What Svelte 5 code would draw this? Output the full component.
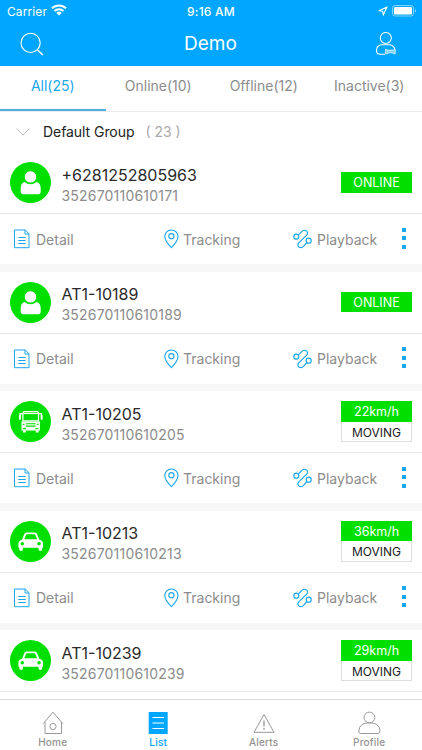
<script lang="ts">
  type Device = {
    name: string;
    imei: string;
    kind: 'person' | 'bus' | 'car';
    speed?: number;
  };

  const tabs = [
    { label: 'All', count: 25 },
    { label: 'Online', count: 10 },
    { label: 'Offline', count: 12 },
    { label: 'Inactive', count: 3 }
  ];

  const devices: Device[] = [
    { name: '+6281252805963', imei: '352670110610171', kind: 'person' },
    { name: 'AT1-10189', imei: '352670110610189', kind: 'person' },
    { name: 'AT1-10205', imei: '352670110610205', kind: 'bus', speed: 22 },
    { name: 'AT1-10213', imei: '352670110610213', kind: 'car', speed: 36 },
    { name: 'AT1-10239', imei: '352670110610239', kind: 'car', speed: 29 }
  ];

  const navItems = ['Home', 'List', 'Alerts', 'Profile'];

  let activeTab = $state('All');
  let activeNav = $state('List');
  let expanded = $state(true);
</script>

<div class="screen">
  <header>
    <div class="status">
      <span class="carrier">Carrier</span>
      <svg class="wifi" width="16" height="12" viewBox="0 0 16 12" fill="none" stroke="#fff" stroke-width="2">
        <path d="M1 4.3a10 10 0 0 1 14 0M3.5 7a6.4 6.4 0 0 1 9 0" />
        <path d="M8 11.5 5.4 8.9a3.7 3.7 0 0 1 5.2 0z" fill="#fff" stroke="none" />
      </svg>
      <span class="clock">9:16 AM</span>
      <svg class="locate" width="10" height="10" viewBox="0 0 10 10" fill="none" stroke="#fff" stroke-width="1.1" stroke-linejoin="round">
        <path d="M9 1 .9 4.7l3.9.5.5 3.9z" />
      </svg>
      <svg class="battery" width="25" height="12" viewBox="0 0 25 12">
        <rect x=".5" y=".5" width="21" height="10.5" rx="2.6" fill="none" stroke="#fff" stroke-opacity=".5" />
        <rect x="2" y="2" width="18" height="7.5" rx="1.3" fill="#fff" />
        <path d="M23 4v3.6q1.2-.5 1.2-1.8T23 4" fill="#fff" opacity=".5" />
      </svg>
    </div>
    <div class="titlebar">
      <button aria-label="Search">
        <svg width="24" height="24" viewBox="0 0 24 24" fill="none" stroke="#fff" stroke-width="1.1">
          <circle cx="10.6" cy="10.9" r="9.6" />
          <path d="m17.4 17.7 5.4 5.2" stroke-width="1.4" />
        </svg>
      </button>
      <h1>Demo</h1>
      <button aria-label="Account">
        <svg width="22" height="24" viewBox="0 0 22 24" fill="none" stroke="#fff" stroke-width="1.1">
          <circle cx="10.8" cy="6" r="5.5" />
          <path d="M10 22.2H5.400q-3.900 0-3.900-3.800 0-4.800 5-5.600h8.300q4.500.8 5 4.800" />
          <path d="m10.500 17.200 2.200.8h5.200l2.400-.8v4.600h-2.100l-.8-1h-3.500l-.9 1h-2.500z" fill="#fff" fill-opacity=".55" stroke-width=".6" />
        </svg>
      </button>
    </div>
  </header>

  <nav class="tabs">
    {#each tabs as tab}
      <button class:active={activeTab === tab.label} onclick={() => (activeTab = tab.label)}>
        {tab.label}({tab.count})
      </button>
    {/each}
  </nav>

  <button class="group" onclick={() => (expanded = !expanded)}>
    <svg width="14" height="8" viewBox="0 0 14 8" fill="none" stroke="#bbb" stroke-width="1">
      <path d="m.5.6 6.500 6.300L13.500.6" />
    </svg>
    <span class="group-name">Default Group</span>
    <span class="group-count">( 23 )</span>
  </button>

  <main>
    {#if expanded}
      {#each devices as device, i}
        <article>
          <div class="info">
            <div class="avatar">
              {#if device.kind === 'person'}
                <svg width="41" height="41" viewBox="0 0 41 41" fill="#fff">
                  <path d="M14.500 20Q17 22.300 20.500 22.300T26.500 20q4.200 1 4.200 6.500v3.500q0 2.300-2.300 2.300H13q-2.300 0-2.300-2.300v-3.500q0-5.500 3.800-6.500z" />
                  <circle cx="20.500" cy="14.900" r="6.200" stroke="#00df00" stroke-width="1" />
                </svg>
              {:else if device.kind === 'bus'}
                <svg width="41" height="41" viewBox="0 0 40 40" fill="none" stroke="#fff" stroke-width="1.2">
                  <path d="M12.600 19.500v-7.700q0-1.400 1.400-1.400h12.400q1.400 0 1.400 1.400v7.700z" />
                  <path d="M13 12.200h14.500" />
                  <path d="M12 12.400H9.800v4.800M28.400 12.400h2.300v4.800" stroke-width="1.3" />
                  <path d="M9.600 14v4.200M30.900 14v4.200" stroke-width="1.8" />
                  <path d="M11.200 20h18v8.800h-18z" fill="#fff" stroke="none" />
                  <path d="M15.500 22.200h9.500M15.500 24.500h9.500M12.600 26.900h3M24.800 26.900h3M12.500 22.800h1.600M26.200 22.800h1.600" stroke="#00df00" />
                  <path d="M14 28.500v2.200M26.500 28.500v2.200" stroke-width="2.7" />
                </svg>
              {:else}
                <svg width="41" height="41" viewBox="0 0 40 40" fill="#fff">
                  <path fill-rule="evenodd" d="m11.800 18.200 2.200-5.600q.6-1.500 2.100-1.500h8.200q1.500 0 2.100 1.500l2.200 5.600q3.600.8 3.600 4v3.900h-.8v1.200q0 2-1.800 2t-1.800-2v-1.200H12.600v1.200q0 2-1.800 2t-1.800-2v-1.200h-.8v-3.900q0-3.200 3.600-4zm2.100-.3h12.600l-1.800-4.300q-.2-.6-.8-.6h-7.400q-.6 0-.8.6z" />
                  <circle cx="12" cy="22.200" r="1.700" fill="#00df00" />
                  <circle cx="28.300" cy="22.200" r="1.700" fill="#00df00" />
                </svg>
              {/if}
            </div>
            <div class="names">
              <span class="name">{device.name}</span>
              <span class="imei">{device.imei}</span>
            </div>
            <div class="state">
              {#if device.speed}
                <span class="fill">{device.speed}km/h</span>
                <span class="outline">MOVING</span>
              {:else}
                <span class="fill">ONLINE</span>
              {/if}
            </div>
          </div>
          {#if i < devices.length - 1}
            <div class="actions">
              <button class="detail">
                <svg width="16" height="20" viewBox="0 0 16 20" fill="none" stroke="#1ba7ee" stroke-width="1">
                  <path d="M.5 1h10.800l3.700 3.700v14H.5zM11 1v4h4" />
                  <path d="M4.300 8.500h7.400M4.300 11.500h7.400M4.300 14.500h7.400" />
                </svg>
                Detail
              </button>
              <button class="tracking">
                <svg width="15" height="20" viewBox="0 0 15 20" fill="none" stroke="#1ba7ee" stroke-width="1.1">
                  <path d="M7.400 18.700Q.8 12 .8 7.600a6.600 6.600 0 0 1 13.200 0q0 4.400-6.600 11.100z" />
                  <circle cx="7.400" cy="7.200" r="2.600" />
                </svg>
                Tracking
              </button>
              <button class="playback">
                <svg width="19" height="20" viewBox="0 0 19 20" fill="none" stroke="#1ba7ee" stroke-width="1.2">
                  <circle cx="3.300" cy="7.700" r="2.500" />
                  <circle cx="15.700" cy="11.700" r="2.500" />
                  <path d="M5.300 6.100 9 2.400q2.200-2 4.500-.5 2 1.800.2 4.300l-7.900 7.600q-1.900 2.400.1 4.200 2.200 1.500 4.400-.4l3.700-4.100" />
                </svg>
                Playback
              </button>
              <button class="more" aria-label="More">
                <i></i><i></i><i></i>
              </button>
            </div>
          {/if}
        </article>
      {/each}
    {/if}
  </main>

  <nav class="bottom">
    {#each navItems as item}
      <button class:active={activeNav === item} onclick={() => (activeNav = item)}>
        <svg width="24" height="24" viewBox="0 0 24 24" fill="none" stroke="#999" stroke-width="1">
          {#if item === 'Home'}
            <path d="M2.200 12.700 12 1.200l9.800 11.500M4 11v11.500h16.500V11" />
            <circle cx="12" cy="15.500" r="3.100" />
          {:else if item === 'List'}
            <path d="M2.700 1h19v22h-19z" fill="#00a6ff" stroke="none" />
            <path d="M6.500 6.500h11.500M6.500 12h11.500M6.500 17.500h11.500" stroke="#fff" />
          {:else if item === 'Alerts'}
            <path d="m12 3.500 10 17.800H2z" />
            <path d="M12 9.500v6" stroke-width="1.3" />
            <circle cx="12" cy="17.800" r=".9" fill="#999" stroke="none" />
          {:else}
            <circle cx="12.400" cy="6.500" r="5.400" />
            <path d="M3.800 22.500q-2.200 0-2-2.700.6-8 10.600-8t10.600 8q.2 2.700-2 2.700z" />
          {/if}
        </svg>
        <span>{item}</span>
      </button>
    {/each}
  </nav>
</div>

<style>
  :global(body) {
    margin: 0;
    background: #fff;
  }

  .screen {
    width: 422px;
    height: 750px;
    display: flex;
    flex-direction: column;
    overflow: hidden;
    background: #fff;
    font-family: Inter, 'Liberation Sans', sans-serif;
    color: #333;
  }

  button {
    padding: 0;
    border: 0;
    background: none;
    font: inherit;
    color: inherit;
  }

  svg {
    display: block;
    flex: none;
  }

  header {
    flex: none;
    height: 66px;
    background: #00a6ff;
    color: #fff;
  }

  .status {
    height: 22px;
    display: grid;
    grid-template-columns: 44px 1fr auto 1fr 21px 25px;
    align-items: center;
    padding: 0 5px 0 7px;
    box-sizing: border-box;
    font-size: 12px;
  }

  .carrier {
    letter-spacing: 0.1px;
  }

  .wifi {
    margin-top: -2px;
  }

  .clock {
    font-weight: 500;
    letter-spacing: 0.2px;
  }

  .locate {
    grid-column: 5;
    justify-self: end;
    margin-right: 4px;
  }

  .titlebar {
    height: 44px;
    display: flex;
    align-items: center;
    justify-content: space-between;
    padding: 0 25px 0 20px;
    box-sizing: border-box;
  }

  .titlebar button {
    padding-bottom: 1px;
  }

  h1 {
    margin: 0;
    padding-left: 2px;
    font-size: 19px;
    font-weight: 400;
    line-height: 24px;
  }

  .tabs {
    flex: none;
    height: 45.5px;
    display: grid;
    grid-template-columns: repeat(4, 1fr);
    border-bottom: 1px solid #ececec;
    box-sizing: border-box;
  }

  .tabs button {
    font-size: 14px;
    color: #8c8c8c;
    padding-bottom: 3px;
    border-bottom: 2px solid transparent;
  }

  .tabs button.active {
    color: #1ba7ee;
    border-bottom-color: #4eb0e6;
  }

  .group {
    flex: none;
    height: 40.5px;
    display: flex;
    align-items: center;
    padding-left: 16px;
    font-size: 14px;
  }

  .group-name {
    margin-left: 13px;
    color: #222;
    letter-spacing: -0.06px;
  }

  .group-count {
    margin-left: 11px;
    color: #aaa;
  }

  main {
    flex: 1;
    min-height: 0;
    overflow: hidden;
  }

  article {
    height: 119.5px;
    background: linear-gradient(#fff 112px, #f7f7f7 112px);
  }

  .info {
    height: 62px;
    box-sizing: border-box;
    display: flex;
    align-items: center;
    padding: 0 10px 0 10px;
    border-bottom: 1px solid #e8e8e8;
  }

  .avatar {
    width: 41px;
    height: 41px;
    border-radius: 50%;
    background: #00df00;
  }

  .names {
    flex: 1;
    display: flex;
    flex-direction: column;
    padding: 5px 0 0 10.5px;
  }

  .name {
    font-size: 16px;
    line-height: 20px;
    color: #2a2a2a;
  }

  .imei {
    font-size: 14px;
    line-height: 21px;
    letter-spacing: 0.2px;
    color: #8c8c8c;
  }

  .state {
    width: 71px;
    font-size: 12.5px;
    text-align: center;
  }

  .state span {
    display: block;
    height: 20.5px;
    line-height: 21px;
    box-sizing: border-box;
  }

  .fill {
    background: #00df00;
    color: #fff;
  }

  .outline {
    border: 1px solid #ddd;
    border-top: 0;
    color: #222;
    font-size: 12px;
  }

  .actions {
    height: 50px;
    display: grid;
    grid-template-columns: 150px 129px 102px 1fr;
    padding-left: 14px;
    font-size: 14px;
    color: #8c8c8c;
  }

  .actions button {
    display: flex;
    align-items: center;
  }

  .detail svg {
    margin-right: 6px;
  }

  .tracking svg {
    margin-right: 4px;
  }

  .playback svg {
    margin-right: 5px;
  }

  .actions .more {
    flex-direction: column;
    align-items: flex-start;
    justify-content: center;
    gap: 4.5px;
    padding: 0 0 2px 7px;
  }

  .more i {
    width: 4px;
    height: 4px;
    background: #1ba7ee;
  }

  .bottom {
    flex: none;
    height: 51px;
    display: grid;
    grid-template-columns: repeat(4, 1fr);
    border-top: 1px solid #dcdcdc;
    box-sizing: border-box;
    background: #fff;
  }

  .bottom button {
    display: flex;
    flex-direction: column;
    align-items: center;
    padding-top: 11px;
    font-size: 10px;
    font-weight: 500;
    letter-spacing: 0.2px;
    color: #929292;
  }

  .bottom span {
    line-height: 14px;
  }

  .bottom button.active {
    color: #00a6ff;
  }
</style>
